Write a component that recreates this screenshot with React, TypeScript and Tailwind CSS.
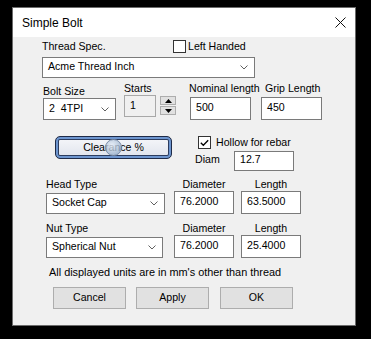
import React from 'react'

const font = { fontFamily: '"Liberation Sans", Arial, sans-serif' }

const Chevron = () => (
  <svg width="8" height="5" viewBox="0 0 8 5" className="shrink-0">
    <polyline points="0.5,0.5 4,4 7.5,0.5" fill="none" stroke="#606060" strokeWidth="1" />
  </svg>
)

const Combo = ({ text, w, h, cls = '' }: { text: string; w: string; h: string; cls?: string }) => (
  <div className={`flex items-center justify-between border border-[#7a7a7a] bg-white pl-[5px] pr-[6px] ${w} ${h} ${cls}`}>
    <span className="whitespace-pre pb-[1px]">{text}</span>
    <Chevron />
  </div>
)

const Edit = ({ text, w, h, cls = '' }: { text: string; w: string; h: string; cls?: string }) => (
  <div className={`flex items-center border border-[#7a7a7a] bg-white pl-[5px] pb-[2px] ${w} ${h} ${cls}`}>
    {text}
  </div>
)

const Label = ({ children, cls = '' }: { children: React.ReactNode; cls?: string }) => (
  <div className={`h-[13px] leading-[13px] whitespace-nowrap ${cls}`}>{children}</div>
)

const Btn = ({ text }: { text: string }) => (
  <div className="flex h-[22px] w-[73px] items-center justify-center border border-[#adadad] bg-[#e1e1e1]">
    {text}
  </div>
)

const App = () => {
  return (
    <div className="h-[339px] w-[371px] bg-black pl-[12px] pt-[7px]" style={font}>
      <div className="flex h-[319px] w-[344px] flex-col border border-[#6b6b6b] bg-[#f0f0f0] text-[10.6px] text-black">
        {/* title bar */}
        <div className="flex h-[29px] shrink-0 items-center justify-between bg-white pl-[9px] pr-[9px]">
          <span className="text-[12px]">Simple Bolt</span>
          <svg width="11" height="11" viewBox="0 0 11 11">
            <path d="M0.5 0.5 L10.5 10.5 M10.5 0.5 L0.5 10.5" stroke="#111" strokeWidth="1" />
          </svg>
        </div>

        {/* thread spec row */}
        <div className="flex h-[20px] items-start">
          <Label cls="ml-[29px] mt-[3px] w-[131px]">Thread Spec.</Label>
          <div className="mt-[3px] h-[13px] w-[13px] border border-[#333] bg-white" />
          <Label cls="ml-[2px] mt-[3px]">Left Handed</Label>
        </div>
        <Combo text="Acme Thread Inch" w="w-[213px]" h="h-[21px]" cls="ml-[29px]" />

        {/* bolt size row */}
        <div className="flex h-[42px] items-start">
          <div className="ml-[30px] flex w-[73px] flex-col">
            <Label cls="mt-[7px]">Bolt Size</Label>
            <Combo text="2  4TPI" w="w-[73px]" h="h-[22px]" />
          </div>
          <div className="ml-[8px] flex w-[32px] flex-col">
            <Label cls="mt-[4px]">Starts</Label>
            <div className="h-[22px] w-[32px] border border-[#a8a8a8] bg-[#f0f0f0] pl-[5px] pt-[3px] leading-[13px]">1</div>
          </div>
          <div className="ml-[4px] mt-[18px] flex w-[16px] flex-col gap-[1px]">
            <div className="flex h-[9px] items-center justify-center border border-[#adadad] bg-[#e1e1e1]">
              <svg width="7" height="4" viewBox="0 0 7 4"><polygon points="3.5,0 7,4 0,4" fill="#000" /></svg>
            </div>
            <div className="flex h-[9px] items-center justify-center border border-[#adadad] bg-[#e1e1e1]">
              <svg width="7" height="4" viewBox="0 0 7 4"><polygon points="0,0 7,0 3.5,4" fill="#000" /></svg>
            </div>
          </div>
          <div className="ml-[13px] flex w-[62px] flex-col">
            <Label cls="mt-[4px]">Nominal length</Label>
            <Edit text="500" w="w-[61px]" h="h-[23px]" cls="ml-[1px] mt-[2px]" />
          </div>
          <div className="ml-[10px] flex w-[61px] flex-col">
            <Label cls="mt-[4px] pl-[4px]">Grip Length</Label>
            <Edit text="450" w="w-[61px]" h="h-[23px]" cls="mt-[2px]" />
          </div>
        </div>

        {/* clearance row */}
        <div className="flex h-[51px] items-start">
          <div className="relative ml-[42px] mt-[16px] flex h-[23px] w-[117px] items-center justify-center rounded-[5px] border border-[#1e2b48] bg-gradient-to-b from-[#f6f7fa] to-[#dfe3ec] shadow-[inset_0_0_0_2px_#6d95cf,inset_0_0_0_3px_#2c3c5e]">
            <span className="relative">Clearance %</span>
            <div className="absolute left-[49px] top-[2px] h-[17px] w-[17px] rounded-full border border-[#7d8ea8] bg-[radial-gradient(circle_at_40%_35%,rgba(230,238,248,0.8),rgba(120,150,185,0.75))]" />
          </div>
          <div className="ml-[23px] mt-[16px] flex flex-col">
            <div className="flex items-center pl-[3px]">
              <div className="flex h-[13px] w-[13px] items-center justify-center border border-[#333] bg-white">
                <svg width="9" height="8" viewBox="0 0 9 8">
                  <polyline points="0.8,3.8 3.3,6.3 8.2,1.2" fill="none" stroke="#000" strokeWidth="1.3" />
                </svg>
              </div>
              <Label cls="ml-[5px]">Hollow for rebar</Label>
            </div>
            <div className="mt-[2px] flex h-[20px] items-center">
              <Label cls="mb-[3px] w-[39px]">Diam</Label>
              <Edit text="12.7" w="w-[60px]" h="h-[20px]" />
            </div>
          </div>
        </div>

        {/* head type row */}
        <div className="flex h-[43px] items-start">
          <div className="ml-[33px] flex w-[119px] flex-col">
            <Label cls="mt-[7px]">Head Type</Label>
            <Combo text="Socket Cap" w="w-[119px]" h="h-[21px]" cls="mt-[2px]" />
          </div>
          <div className="ml-[9px] flex w-[60px] flex-col">
            <Label cls="mt-[7px] text-center">Diameter</Label>
            <Edit text="76.2000" w="w-[60px]" h="h-[23px]" />
          </div>
          <div className="ml-[7px] flex w-[60px] flex-col">
            <Label cls="mt-[7px] text-center">Length</Label>
            <Edit text="63.5000" w="w-[60px]" h="h-[23px]" />
          </div>
        </div>

        {/* nut type row */}
        <div className="flex h-[44px] items-start">
          <div className="ml-[33px] flex w-[119px] flex-col">
            <Label cls="mt-[8px]">Nut Type</Label>
            <Combo text="Spherical Nut" w="w-[117px]" h="h-[21px]" cls="mt-[2px]" />
          </div>
          <div className="ml-[9px] flex w-[60px] flex-col">
            <Label cls="mt-[8px] text-center">Diameter</Label>
            <Edit text="76.2000" w="w-[60px]" h="h-[23px]" />
          </div>
          <div className="ml-[7px] flex w-[60px] flex-col">
            <Label cls="mt-[8px] text-center">Length</Label>
            <Edit text="25.4000" w="w-[60px]" h="h-[23px]" />
          </div>
        </div>

        <Label cls="ml-[36px] mt-[8px] text-[10.9px]">All displayed units are in mm's other than thread</Label>

        <div className="ml-[40px] mt-[8px] flex">
          <Btn text="Cancel" />
          <div className="ml-[10px]"><Btn text="Apply" /></div>
          <div className="ml-[11px]"><Btn text="OK" /></div>
        </div>
      </div>
    </div>
  )
}

export default App
